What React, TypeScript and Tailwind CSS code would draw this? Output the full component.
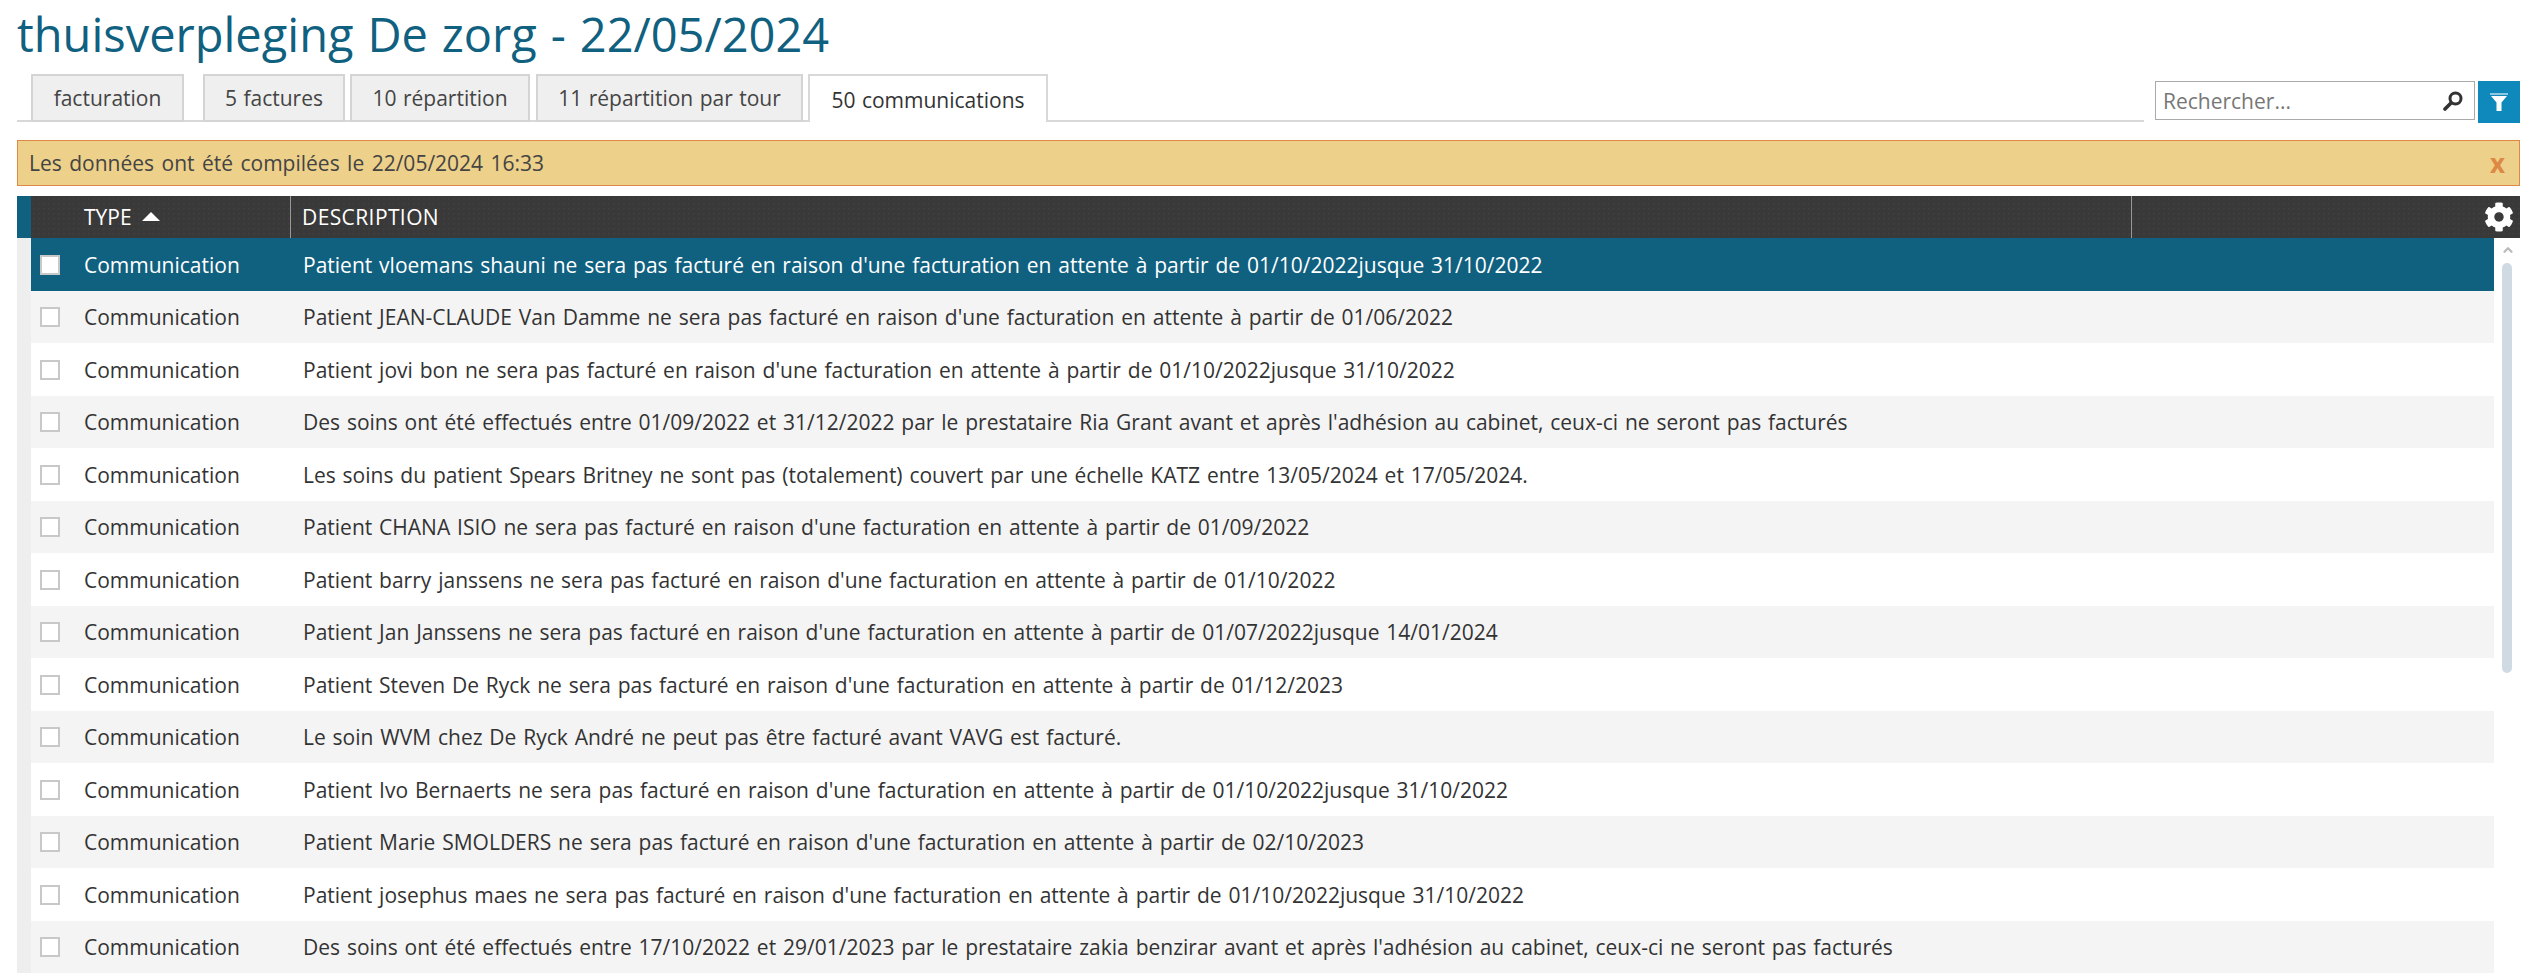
import { ChevronUp } from "lucide-react";
import { FaCog } from "react-icons/fa";

const rows = [
  "Patient vloemans shauni ne sera pas facturé en raison d'une facturation en attente à partir de 01/10/2022jusque 31/10/2022",
  "Patient JEAN-CLAUDE Van Damme ne sera pas facturé en raison d'une facturation en attente à partir de 01/06/2022",
  "Patient jovi bon ne sera pas facturé en raison d'une facturation en attente à partir de 01/10/2022jusque 31/10/2022",
  "Des soins ont été effectués entre 01/09/2022 et 31/12/2022 par le prestataire Ria Grant avant et après l'adhésion au cabinet, ceux-ci ne seront pas facturés",
  "Les soins du patient Spears Britney ne sont pas (totalement) couvert par une échelle KATZ entre 13/05/2024 et 17/05/2024.",
  "Patient CHANA ISIO ne sera pas facturé en raison d'une facturation en attente à partir de 01/09/2022",
  "Patient barry janssens ne sera pas facturé en raison d'une facturation en attente à partir de 01/10/2022",
  "Patient Jan Janssens ne sera pas facturé en raison d'une facturation en attente à partir de 01/07/2022jusque 14/01/2024",
  "Patient Steven De Ryck ne sera pas facturé en raison d'une facturation en attente à partir de 01/12/2023",
  "Le soin WVM chez De Ryck André ne peut pas être facturé avant VAVG est facturé.",
  "Patient Ivo Bernaerts ne sera pas facturé en raison d'une facturation en attente à partir de 01/10/2022jusque 31/10/2022",
  "Patient Marie SMOLDERS ne sera pas facturé en raison d'une facturation en attente à partir de 02/10/2023",
  "Patient josephus maes ne sera pas facturé en raison d'une facturation en attente à partir de 01/10/2022jusque 31/10/2022",
  "Des soins ont été effectués entre 17/10/2022 et 29/01/2023 par le prestataire zakia benzirar avant et après l'adhésion au cabinet, ceux-ci ne seront pas facturés",
];

const tabs = [
  { label: "facturation", cls: "w-[153px] mr-[19px]" },
  { label: "5 factures", cls: "w-[142px] mr-[5px]" },
  { label: "10 répartition", cls: "w-[180px] mr-[6px]" },
  { label: "11 répartition par tour", cls: "w-[267px] mr-[5px]" },
];

const App = () => {
  return (
    <div className="h-[974px] w-[2534px] overflow-hidden bg-white font-['Open_Sans','Noto_Sans',sans-serif] text-[#333]">
      <div className="pr-[14px] pl-[17px]">
        <h1 className="h-[74px] pt-[2px] text-[47px] leading-[64px] font-normal text-[#10607f] [word-spacing:1.7px]">
          thuisverpleging De zorg - 22/05/2024
        </h1>

        <div className="flex h-[49px] items-start">
          <div className="flex h-[48px] flex-1 items-end border-b-2 border-[#d8d8d8] pl-[14px]">
            {tabs.map((t) => (
              <div
                key={t.label}
                className={`${t.cls} -mb-[2px] flex h-[48px] items-center justify-center border-2 border-[#d4d4d4] bg-[#efefef] pt-[2px] text-[21px] text-[#444] [word-spacing:1px]`}
              >
                {t.label}
              </div>
            ))}
            <div className="-mb-[2px] flex h-[48px] w-[240px] items-center justify-center border-2 border-b-0 border-[#d8d8d8] bg-white pt-[3px] text-[21px] text-[#333] [word-spacing:1px]">
              50 communications
            </div>
          </div>
          <div className="mt-[7px] ml-[11px] flex h-[39px] w-[320px] items-center justify-between border border-[#aaa] pr-[11px] pl-[7px]">
            <span className="pt-[2px] text-[21px] text-[#777]">Rechercher...</span>
            <svg viewBox="0 0 20 20" className="h-[20px] w-[20px]">
              <circle cx="12.5" cy="7.5" r="5.5" fill="none" stroke="#333" strokeWidth="3" />
              <path d="M8 12 L2 18" stroke="#333" strokeWidth="3.6" strokeLinecap="round" />
            </svg>
          </div>
          <div className="mt-[7px] ml-[3px] flex h-[42px] w-[42px] items-center justify-center bg-[#0f88bb]">
            <svg viewBox="0 0 18 18" className="h-[18px] w-[18px]">
              <path d="M0 0 H18 V2 H0 Z" fill="#8fc6e0" />
              <path d="M1 3 H17 L11.5 9.5 V18 H6.5 V9.5 Z" fill="#fff" />
            </svg>
          </div>
        </div>

        <div className="mt-[17px] flex h-[46px] items-center justify-between border border-[#dd8844] bg-[#edd089] pr-[14px] pl-[11px] text-[21px] text-[#444]">
          <span className="pt-[2px] [word-spacing:2px]">Les données ont été compilées le 22/05/2024 16:33</span>
          <span className="text-[26px] leading-none font-bold text-[#dd8844]">x</span>
        </div>

        <div className="mt-[10px] flex h-[42px] border-l-[14px] border-[#10607f] bg-[#393939] bg-[radial-gradient(#3f3f3f_1px,transparent_1px)] bg-[length:5px_5px] text-[21px] text-white">
          <div className="flex w-[260px] items-center border-r border-[#999] pt-[2px] pl-[53px]">
            TYPE
            <span className="mb-[3px] ml-[10px] h-0 w-0 border-x-[9px] border-b-[9px] border-x-transparent border-b-white" />
          </div>
          <div className="flex flex-1 items-center border-r border-[#999] pt-[2px] pl-[11px] tracking-[0.4px]">
            DESCRIPTION
          </div>
          <div className="flex w-[388px] items-center justify-end pr-[6px]">
            <FaCog className="h-[30px] w-[30px] text-white" />
          </div>
        </div>

        <div className="flex">
          <div className="w-[14px] bg-[#eeeeee]" />
          <div className="w-[2463px]">
            {rows.map((text, i) => (
              <div
                key={text}
                className={`flex h-[52.5px] items-center text-[21px] ${
                  i === 0 ? "bg-[#10607f] text-white" : i % 2 === 1 ? "bg-[#f4f4f4]" : "bg-white"
                }`}
              >
                <span className="mt-px ml-[9px] h-[20px] w-[20px] shrink-0 border-2 border-[#c8c8c8] bg-white" />
                <span className="ml-[24px] w-[219px] shrink-0 pt-[2px]">Communication</span>
                <span className="pt-[2px] whitespace-nowrap [word-spacing:1.4px]">{text}</span>
              </div>
            ))}
          </div>
          <div className="relative w-[26px]">
            <ChevronUp className="absolute top-[5px] left-[7px] h-[14px] w-[14px] text-[#bbb]" strokeWidth={4} />
            <div className="absolute top-[25px] left-[8px] h-[410px] w-[10px] rounded-[5px] bg-[#d0dae3]" />
          </div>
        </div>
      </div>
    </div>
  );
};

export default App;
